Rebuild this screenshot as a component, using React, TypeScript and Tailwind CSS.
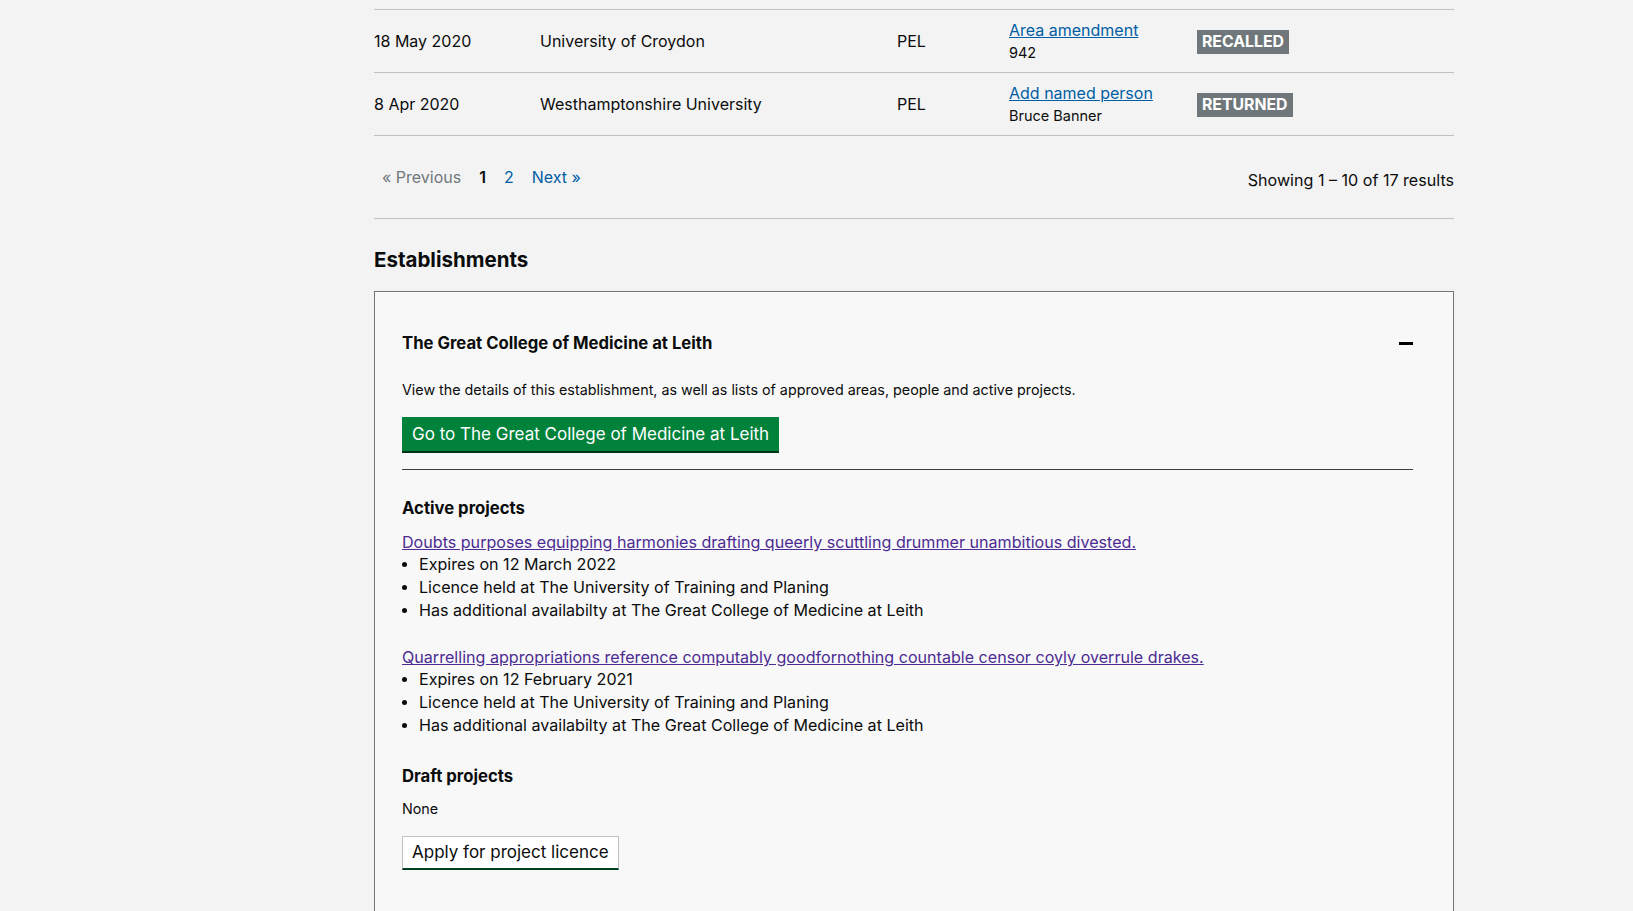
import React from 'react';

type Row = {
  date: string;
  establishment: string;
  licence: string;
  task: string;
  detail: string;
  status: string;
};

const rows: Row[] = [
  { date: '18 May 2020', establishment: 'University of Croydon', licence: 'PEL', task: 'Area amendment', detail: '942', status: 'Recalled' },
  { date: '8 Apr 2020', establishment: 'Westhamptonshire University', licence: 'PEL', task: 'Add named person', detail: 'Bruce Banner', status: 'Returned' },
];

const projects = [
  {
    title: 'Doubts purposes equipping harmonies drafting queerly scuttling drummer unambitious divested.',
    expires: '12 March 2022',
  },
  {
    title: 'Quarrelling appropriations reference computably goodfornothing countable censor coyly overrule drakes.',
    expires: '12 February 2021',
  },
];

const App: React.FC = () => {
  return (
    <div
      className="min-h-[911px] bg-[#f3f3f3] text-[#0b0c0c]"
      style={{ fontFamily: 'Inter, "Liberation Sans", sans-serif' }}
    >
      <div className="ml-[374px] w-[1080px] pt-[9px]">
        {/* Task table (tail end) */}
        <div className="border-t border-[#bfc1c3]">
          {rows.map((row) => (
            <div
              key={row.date}
              className="grid grid-cols-[166px_357px_112px_188px_1fr] items-center h-[63px] border-b border-[#bfc1c3] text-[16px]"
            >
              <span>{row.date}</span>
              <span>{row.establishment}</span>
              <span>{row.licence}</span>
              <div className="flex flex-col">
                <a href="#" className="text-[#005ea5] underline leading-[23px]">
                  {row.task}
                </a>
                <span className="text-[14.5px] leading-[21px]">{row.detail}</span>
              </div>
              <div>
                <span className="inline-block bg-[#6f777b] text-white font-bold uppercase px-[5px] h-[24px] leading-[24px] text-[15.8px]">
                  {row.status}
                </span>
              </div>
            </div>
          ))}
        </div>

        {/* Pagination */}
        <div className="flex justify-between h-[83px] border-b border-[#bfc1c3] text-[16px] leading-[22px]">
          <div className="flex gap-[18px] pl-[8px] pt-[30px]">
            <span className="text-[#6f777b]">« Previous</span>
            <span className="font-semibold">1</span>
            <a href="#" className="text-[#005ea5]">2</a>
            <a href="#" className="text-[#005ea5]">Next »</a>
          </div>
          <div className="pt-[33px] text-[16.1px]">Showing 1 – 10 of 17 results</div>
        </div>

        {/* Establishments */}
        <h2 className="mt-[29px] text-[20.5px] leading-[24px] font-bold">Establishments</h2>

        <div className="mt-[19px] border border-[#6f777b] bg-[#f8f8f8] pl-[27px] pr-[40px] pt-[41px] pb-[60px]">
          <div className="flex items-center justify-between h-[20px]">
            <h3 className="text-[16.7px] font-bold leading-[20px]">The Great College of Medicine at Leith</h3>
            <span className="block w-[14px] h-[3px] bg-black" />
          </div>

          <p className="mt-[27px] text-[14.3px] leading-[20px]">
            View the details of this establishment, as well as lists of approved areas, people and active projects.
          </p>

          <a
            href="#"
            className="mt-[17px] inline-block bg-[#00823b] text-white text-[17px] leading-[34px] h-[34px] px-[10px] shadow-[0_2px_0_#003418]"
          >
            Go to The Great College of Medicine at Leith
          </a>

          <hr className="mt-[18px] border-0 border-t border-[#3d3d3d]" />

          <h4 className="mt-[27px] text-[16.7px] font-bold leading-[22px]">Active projects</h4>

          <div className="mt-[13px] flex flex-col gap-[25px] text-[16.1px]">
            {projects.map((p) => (
              <div key={p.title}>
                <a href="#" className="block text-[#4c2c92] underline leading-[21px]">
                  {p.title}
                </a>
                <ul className="leading-[23px]">
                  {[
                    `Expires on ${p.expires}`,
                    'Licence held at The University of Training and Planing',
                    'Has additional availabilty at The Great College of Medicine at Leith',
                  ].map((item) => (
                    <li key={item} className="flex items-center">
                      <span className="w-[17px] flex-none">
                        <span className="block w-[5px] h-[5px] rounded-full bg-[#0b0c0c]" />
                      </span>
                      {item}
                    </li>
                  ))}
                </ul>
              </div>
            ))}
          </div>

          <h4 className="mt-[28px] text-[16.7px] font-bold leading-[22px]">Draft projects</h4>
          <p className="mt-[12px] text-[14.3px] leading-[20px]">None</p>

          <button className="mt-[17px] h-[34px] px-[9px] bg-white border border-[#bfc1c3] border-b-[2px] border-b-[#00401e] text-[17px] leading-[31px]">
            Apply for project licence
          </button>
        </div>
      </div>
    </div>
  );
};

export default App;
